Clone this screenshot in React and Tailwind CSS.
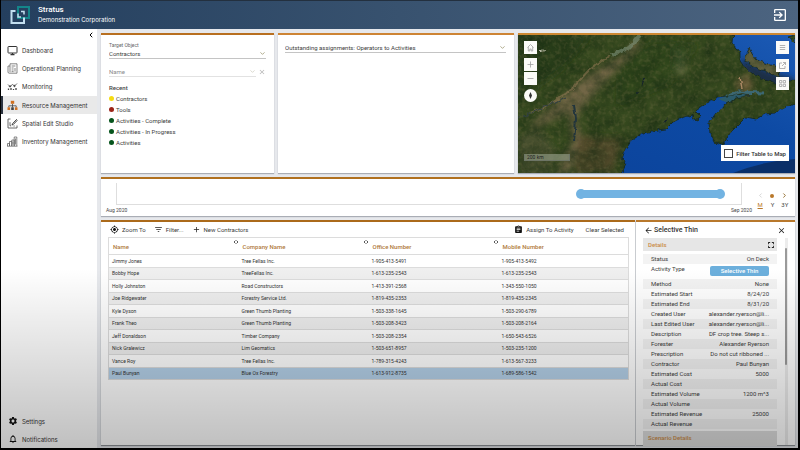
import React, { useState } from 'react';
import {
  MdAdd,
  MdArrowBack,
  MdAssignment,
  MdClose,
  MdExitToApp,
  MdFilterList,
  MdFullscreen,
  MdGpsFixed,
  MdNotificationsNone,
  MdSettings,
} from 'react-icons/md';
import { LuChevronDown, LuChevronLeft, LuChevronRight, LuChevronsLeftRight } from 'react-icons/lu';

const CONTACTS = [
  ['Jimmy Jones', 'Tree Fellas Inc.', '1-905-413-5491', '1-905-413-5492'],
  ['Bobby Hope', 'TreeFellas Inc.', '1-613-235-2543', '1-613-235-2543'],
  ['Holly Johnston', 'Road Constructors', '1-413-391-2568', '1-343-550-1050'],
  ['Joe Ridgewater', 'Forestry Service Ltd.', '1-819-435-2353', '1-819-435-2345'],
  ['Kyle Dyson', 'Green Thumb Planting', '1-503-338-1645', '1-503-290-6789'],
  ['Frank Theo', 'Green Thumb Planting', '1-503-208-3423', '1-503-208-2164'],
  ['Jeff Donaldson', 'Timber Company', '1-503-208-2354', '1-650-543-6526'],
  ['Nick Gralewicz', 'Lim Geomatics', '1-503-651-8957', '1-503-235-1200'],
  ['Vance Roy', 'Tree Fellas Inc.', '1-789-315-4243', '1-613-567-3233'],
  ['Paul Bunyan', 'Blue Ox Forestry', '1-613-912-8735', '1-689-586-1542'],
];

const COLUMNS = ['Name', 'Company Name', 'Office Number', 'Mobile Number'];

const DETAILS = [
  ['Status', 'On Deck'],
  ['Activity Type', 'Selective Thin'],
  ['Method', 'None'],
  ['Estimated Start', '8/24/20'],
  ['Estimated End', '8/31/20'],
  ['Created User', 'alexander.ryerson@li...'],
  ['Last Edited User', 'alexander.ryerson@li...'],
  ['Description', 'DF crop tree. Steep s...'],
  ['Forester', 'Alexander Ryerson'],
  ['Prescription', 'Do not cut ribboned ...'],
  ['Contractor', 'Paul Bunyan'],
  ['Estimated Cost', '5000'],
  ['Actual Cost', ''],
  ['Estimated Volume', '1200 m^3'],
  ['Actual Volume', ''],
  ['Estimated Revenue', '25000'],
  ['Actual Revenue', ''],
];

const RECENT = [
  { label: 'Contractors', dot: 'bg-[#f5dc14]' },
  { label: 'Tools', dot: 'bg-[#9c2418]' },
  { label: 'Activities - Complete', dot: 'bg-[#06541c]' },
  { label: 'Activities - In Progress', dot: 'bg-[#06541c]' },
  { label: 'Activities', dot: 'bg-[#06541c]' },
];

// Share of the visible month, in percent
const TASK = { start: 73.5, length: 24 };

const Logo = () => (
  <svg viewBox="0 0 22 20" className="w-[22px] h-5" fill="none" strokeWidth="2">
    <path d="M9 2h11v11H9z" stroke="#14858a" />
    <path d="M6.500 6H2.500v12H15v-5.500" stroke="#c3dff0" />
    <path d="M9 8.500V12h3M12 6.500h3V9.500" stroke="#c3dff0" strokeWidth="1.500" />
  </svg>
);

const DashboardIcon = () => (
  <svg viewBox="0 0 11 11" className="size-[11px]" fill="none" stroke="#333">
    <rect x="1" y="1.500" width="9" height="6.500" rx="0.600" />
    <path d="M3.500 9.700h4M5.500 8v1.500" strokeWidth="1.200" />
  </svg>
);

const PlanningIcon = () => (
  <svg viewBox="0 0 11 11" className="size-[11px]" fill="none" stroke="#555" strokeWidth="0.700">
    <path d="M3 .8h7v9.400H2.200A1.200 1.200 0 0 1 1 9V3h2z" />
    <path d="M3 3v6.200M4.600 3h3.800M4.600 5h2M4.600 7h2M4.600 8.600h2M8 5v3.600" />
  </svg>
);

const MonitoringIcon = () => (
  <svg viewBox="0 0 11 11" className="size-[11px]" fill="none" stroke="#444" strokeWidth="0.800">
    <path d="M1 3.500l2 2 2.500-2 2 1.500L10 2.500" />
    <path d="M1.500 9V7.500M4 9V7M6.500 9V8M9 9V7" strokeWidth="1.300" />
    <circle cx="3" cy="5.400" r="0.700" fill="#444" />
    <circle cx="7.500" cy="5" r="0.700" fill="#444" />
  </svg>
);

const ResourceIcon = () => (
  <svg viewBox="0 0 11 11" className="size-[11px]" fill="none">
    <path d="M5.500 4v2M1.800 7.500V5.800h7.400v1.700M5.500 6v1.500" stroke="#444" strokeWidth="0.800" />
    <rect x="3.800" y="0.800" width="3.400" height="3" fill="#d07020" />
    <rect x="0.500" y="7.300" width="2.600" height="2.700" fill="#d07020" />
    <rect x="4.200" y="7.300" width="2.600" height="2.700" fill="#444" />
    <rect x="7.900" y="7.300" width="2.600" height="2.700" fill="#d07020" />
  </svg>
);

const SpatialIcon = () => (
  <svg viewBox="0 0 11 11" className="size-[11px]" fill="none" stroke="#444" strokeWidth="0.800">
    <path d="M3.500 1H1v9h9V7.500" />
    <path d="M9.800 1.200L5.600 5.600 5 7l1.400-.6 4-4.200" strokeWidth="1" />
    <path d="M3 4.200v3.600h1.200M6.500 8h1.200" />
  </svg>
);

const InventoryIcon = () => (
  <svg viewBox="0 0 11 11" className="size-[11px]" fill="none" stroke="#555" strokeWidth="0.700">
    <path d="M.5 10V7.500h2V10M2.500 10V5.500h2.300V10M4.800 10V4h2.400v6M7.200 10V1h2.600v9M0 10.200h10.500" />
    <path d="M8.500 2.500v6M6 5.500v3" />
  </svg>
);

const NAV = [
  { label: 'Dashboard', Icon: DashboardIcon },
  { label: 'Operational Planning', Icon: PlanningIcon },
  { label: 'Monitoring', Icon: MonitoringIcon },
  { label: 'Resource Management', Icon: ResourceIcon },
  { label: 'Spatial Edit Studio', Icon: SpatialIcon },
  { label: 'Inventory Management', Icon: InventoryIcon },
];

const MAINLAND =
  'M-4 -4H215L214 8 222 18 222 26 227 33 235 39 246 45 258 49 281 44V68L268 72 257 78 247 79 238 84 228 82 221 89 212 98 205 110 197 108 192 98 191 88 198 78 208 69 219 63 231 60 224 58 216 60 208 61 200 62 189 68 179 75 174 80 165 82 155 87 148 94 139 95 125 98 114 105 107 115 104 124 108 129 102 142H-4Z';
const PEI = 'M232 12L228 20 227 26 235 32 247 36 261 43 262 33 250 29 240 26 234 19Z';

const Terrain = () => (
  <svg viewBox="0 0 277 138" preserveAspectRatio="none" className="absolute inset-0 size-full">
    <defs>
      <linearGradient id="sea" x1="0" y1="1" x2="1" y2="0">
        <stop offset="0" stopColor="#0b429a" />
        <stop offset="0.600" stopColor="#0d4aa4" />
        <stop offset="1" stopColor="#1c5ab4" />
      </linearGradient>
      <filter id="soft" x="-20%" y="-20%" width="140%" height="140%">
        <feGaussianBlur stdDeviation="3" />
      </filter>
      <filter id="edge" x="0" y="0" width="100%" height="100%" colorInterpolationFilters="sRGB">
        <feTurbulence type="fractalNoise" baseFrequency="0.200" numOctaves="2" seed="4" />
        <feDisplacementMap in="SourceGraphic" scale="5" xChannelSelector="R" yChannelSelector="G" />
      </filter>
      <filter id="dark" x="0" y="0" width="100%" height="100%" colorInterpolationFilters="sRGB">
        <feTurbulence type="fractalNoise" baseFrequency="0.070" numOctaves="5" seed="8" />
        <feColorMatrix values="0 0 0 0 0.090  0 0 0 0 0.170  0 0 0 0 0.070  1.600 0 0 0 -0.500" />
      </filter>
      <filter id="light" x="0" y="0" width="100%" height="100%" colorInterpolationFilters="sRGB">
        <feTurbulence type="fractalNoise" baseFrequency="0.250" numOctaves="3" seed="21" />
        <feColorMatrix values="0 0 0 0 0.450  0 0 0 0 0.430  0 0 0 0 0.270  0 1.600 0 0 -0.700" />
      </filter>
      <clipPath id="land">
        <path d={MAINLAND} />
        <path d={PEI} />
      </clipPath>
    </defs>
    <rect width="277" height="138" fill="url(#sea)" />
    <path d="M215 138Q245 126 277 124V138Z" fill="#0a2f68" />
    <path d="M222 22L236 30 262 40 277 44V54L240 50 224 34Z" fill="#1a2f45" filter="url(#soft)" />
    <path d="M200 64L214 59 236 58 216 70Z" fill="#2c5b6a" />
    <g filter="url(#edge)">
      <g fill="#36491f" stroke="#14261f" strokeWidth="0.800">
        <path d={MAINLAND} />
        <path d={PEI} fill="#5d5d3c" />
        <path d="M173 83l4-7 5 5-3 5z" />
        <path d="M270 2l7-2v8z" />
      </g>
    </g>
    <g clipPath="url(#land)">
      <g filter="url(#soft)">
        <path d="M10 92L40 66 70 40 108 18 118 4 122 10 90 44 70 66 58 82 64 110 50 138 38 138 54 106 50 78 24 90Z" fill="#7c6b4c" opacity="0.850" />
        <path d="M0 102l20-10 18 24-6 22H0z" fill="#46502f" />
        <path d="M60 100l46 4-12 34H56z" fill="#54492a" opacity="0.800" />
        <path d="M156 10l12 8-2 24-10-8z" fill="#72764c" opacity="0.900" />
        <path d="M100 30l36-24 44 4-30 40-50 20z" fill="#2c471d" opacity="0.700" />
        <path d="M0 0h74L42 36 0 66z" fill="#243c19" opacity="0.800" />
        <path d="M216 48l14-10 6 14-12 8z" fill="#95724c" opacity="0.800" />
      </g>
      <rect width="277" height="138" filter="url(#dark)" opacity="0.700" />
      <rect width="277" height="138" filter="url(#light)" opacity="0.550" />
      <g filter="url(#edge)" fill="none">
        <path d="M122 0l-10 12-18 8" stroke="#7f927c" strokeWidth="4" opacity="0.600" />
        <path d="M92 20L70 36 54 54 28 72 12 78" stroke="#9a7c5a" strokeWidth="2" opacity="0.500" />
        <path d="M56 70l2 14-2 22" stroke="#22353c" strokeWidth="2" />
        <path d="M0 84L22 74 48 62" stroke="#2f3f43" />
        <path d="M22 16l6-2" stroke="#b6b7a4" />
        <path d="M208 62l12-5 26 1" stroke="#3c6772" strokeWidth="3" />
        <path d="M222 42l2 12" stroke="#ab8864" strokeWidth="1.500" />
        <path d="M126 44l-3 8M118 58h4M146 88l3-4" stroke="#16242a" strokeWidth="1.500" />
      </g>
    </g>
  </svg>
);

const Select = ({ label, muted, value, children, className }) => (
  <span className={`relative flex items-center ${className || ''}`}>
    <select
      aria-label={label}
      defaultValue={value}
      className={`w-full h-[11px] appearance-none bg-transparent border-b text-[6px] outline-none ${
        muted ? 'border-[#e2e2e2] text-[#8a8a8a]' : 'border-[#c4c4c4] text-[#3c3c3c]'
      }`}
    >
      <option>{value}</option>
      {children}
    </select>
    <LuChevronDown
      className={`absolute right-0 size-[7px] pointer-events-none ${muted ? 'text-[#c3bfae]' : 'text-[#7b7340]'}`}
    />
  </span>
);

const MapButton = ({ label, children, className }) => (
  <button
    type="button"
    aria-label={label}
    className={`flex items-center justify-center size-[13px] bg-[#fbfbf8] text-[#a0a0a0] ${className || ''}`}
  >
    <svg viewBox="0 0 9 9" className="size-[9px]" fill="none" stroke="currentColor" strokeWidth="0.800">
      {children}
    </svg>
  </button>
);

const NavLink = ({ label, Icon, active, onClick }) => (
  <a
    href="#"
    onClick={onClick}
    className={`flex flex-1 items-center gap-1 border-l-2 pl-1 whitespace-nowrap ${
      active ? 'border-[#2b3340] bg-[#e9e9e9]' : 'border-transparent'
    }`}
  >
    <span className="flex justify-center w-[11px]">
      <Icon />
    </span>
    {label}
  </a>
);

const Header = () => (
  <header className="flex items-center h-[29px] shrink-0 pl-2 pr-2.5 border-t border-[#23303f] bg-linear-to-r from-[#243f5e] via-[#38526f] to-[#4c6480] text-white">
    <Logo />
    <div className="flex-1 pl-[7px]">
      <h1 className="text-[8px] leading-[10px] font-medium">Stratus</h1>
      <p className="font-['Inter',sans-serif] text-[6px] leading-[10px]">Demonstration Corporation</p>
    </div>
    <button type="button" aria-label="Sign out">
      <MdExitToApp className="size-4" />
    </button>
  </header>
);

const Sidebar = () => {
  const [current, setCurrent] = useState('Resource Management');

  return (
    <aside className="flex flex-col w-24 shrink-0 bg-white font-['Inter',sans-serif] text-[6px] text-[#333]">
      <button type="button" aria-label="Collapse menu" className="self-end flex items-center h-3 pr-0.5">
        <LuChevronLeft className="size-2 text-black" strokeWidth="3" />
      </button>
      <nav className="flex flex-col h-[110px]">
        {NAV.map((item) => (
          <NavLink
            key={item.label}
            {...item}
            active={item.label === current}
            onClick={() => setCurrent(item.label)}
          />
        ))}
      </nav>
      <div className="flex flex-col h-9 mt-auto">
        <NavLink label="Settings" Icon={() => <MdSettings className="size-[10px] text-[#111]" />} />
        <NavLink label="Notifications" Icon={() => <MdNotificationsNone className="size-[10px] text-[#111]" />} />
      </div>
    </aside>
  );
};

const TargetPanel = () => (
  <section className="flex flex-col px-2 pt-[7px] border-t-2 border-[#b86f20] bg-white shadow-[0_1px_1px_#a9adb5]">
    <span className="text-[5px] leading-[6px] text-[#666]">Target Object</span>
    <Select label="Target Object" value="Contractors">
      <option>Tools</option>
    </Select>
    <div className="flex items-center gap-0.5 mt-[7px]">
      <Select label="Name" value="Name" muted className="flex-1" />
      <button type="button" aria-label="Clear name">
        <MdClose className="size-2 text-[#b5b5b5]" />
      </button>
    </div>
    <h2 className="mt-[6px] text-[6px] leading-[10px] font-medium text-[#444]">Recent</h2>
    <ul className="text-[6px] text-[#3c3c3c]">
      {RECENT.map(({ label, dot }) => (
        <li key={label} className="flex items-center gap-0.5 h-[11px]">
          <span className={`size-[5px] rounded-full ${dot}`} />
          {label}
        </li>
      ))}
    </ul>
  </section>
);

const AssignmentsPanel = () => (
  <section className="pl-[7px] pr-2 pt-[7px] border-t-2 border-[#cd8434] bg-white shadow-[0_1px_1px_#a9adb5]">
    <Select label="Outstanding assignments" value="Outstanding assignments: Operators to Activities" />
  </section>
);

const MapPanel = () => (
  <section className="relative overflow-hidden border-t-2 border-[#cd8832] shadow-[0_1px_1px_#a9adb5]">
    <Terrain />
    <div className="absolute left-1.5 top-1.5 flex flex-col gap-1">
      <MapButton label="Home">
        <path d="M1.500 4.500L4.500 1.500l3 3M2.300 4v4h1.500V6h1.400v2h1.500V4" />
      </MapButton>
      <div className="flex flex-col gap-px">
        <MapButton label="Zoom in">
          <path d="M4.500 1.500v6M1.500 4.500h6" />
        </MapButton>
        <MapButton label="Zoom out">
          <path d="M1.500 4.500h6" />
        </MapButton>
      </div>
      <MapButton label="Reset bearing" className="rounded-full">
        <path d="M4.500 1L6 4.500 4.500 8 3 4.500z" fill="#333" stroke="none" />
      </MapButton>
    </div>
    <div className="absolute right-1.5 top-1.5 flex flex-col gap-[5px]">
      <MapButton label="Layers">
        <path d="M1.800 2.500h5.400M1.800 4.500h5.400M1.800 6.500h5.400" />
      </MapButton>
      <MapButton label="Open map">
        <path d="M4 2H1.500v5.500H7V5M5 1.500h2.500V4M7.500 1.500L4 5" />
      </MapButton>
      <MapButton label="Basemaps">
        <path d="M1.500 1.500h2.300v2.300H1.500zM5.200 1.500h2.300v2.300H5.200zM1.500 5.200h2.300v2.300H1.500zM5.200 5.200h2.300v2.300H5.200z" />
      </MapButton>
    </div>
    <span className="absolute left-1.5 bottom-3 w-[46px] h-[7px] pl-0.5 border border-t-0 border-[#6d7566] bg-[#9aa38d]/60 text-[5px] leading-[6px] text-[#222]">
      200 km
    </span>
    <label className="absolute right-1.5 bottom-3 flex items-center gap-[3px] h-4 px-[3px] bg-white text-[6px] font-medium text-[#333] whitespace-nowrap">
      <input type="checkbox" className="appearance-none size-[9px] border border-[#444] checked:bg-[#cd8832]" />
      Filter Table to Map
    </label>
  </section>
);

const Timeline = () => (
  <section className="flex h-[39px] shrink-0 border-t-2 border-[#b0701f] bg-white shadow-[0_1px_1px_#a9adb5] text-[5px] text-[#444]">
    <div className="flex-1 pl-[15px] pt-1">
      <div className="relative h-[22px] border-x border-b border-[#dedede]">
        <div
          className="absolute top-[6px] flex items-center h-[10px]"
          style={{ left: `${TASK.start}%`, width: `${TASK.length}%` }}
        >
          <span className="size-[10px] rounded-full bg-[#72b3e2]" />
          <span className="flex-1 -mx-[5px] h-2 bg-[#72b3e2]" />
          <span className="size-[10px] rounded-full bg-[#72b3e2]" />
        </div>
      </div>
      <div className="flex justify-between h-[11px] -mx-2.5 items-center">
        <span>Aug 2020</span>
        <span>Sep 2020</span>
      </div>
    </div>
    <div className="grid grid-cols-3 content-center items-center justify-items-center w-[37px] ml-3 mr-1 pt-[6px] gap-y-0.5 text-[6px] leading-2">
      <button type="button" aria-label="Previous">
        <LuChevronLeft className="size-[7px] text-[#bbb]" />
      </button>
      <button type="button" aria-label="Today" className="size-1 rounded-full bg-[#b9782a]" />
      <button type="button" aria-label="Next">
        <LuChevronRight className="size-[7px] text-[#8a6420]" strokeWidth="3" />
      </button>
      <button type="button" className="text-[#b9782a] underline">M</button>
      <button type="button">Y</button>
      <button type="button">3Y</button>
    </div>
  </section>
);

const ContractorsTable = () => {
  const [selected, setSelected] = useState('Paul Bunyan');

  return (
    <section className="flex-1 min-w-0 pl-[7px] pr-[6px] border-t-2 border-[#ab6a1b] bg-white shadow-[0_1px_1px_#8b8f95]">
      <div className="flex items-center h-[15px] px-0.5 text-[6px] text-[#3c3c3c]">
        <button type="button" className="flex items-center gap-[3px]">
          <MdGpsFixed className="size-[9px] text-[#111]" />
          Zoom To
        </button>
        <button type="button" className="flex items-center gap-[3px] ml-2">
          <MdFilterList className="size-[9px] text-[#222]" />
          Filter...
        </button>
        <button type="button" className="flex items-center gap-[3px] ml-2">
          <MdAdd className="size-[9px] text-[#222]" />
          New Contractors
        </button>
        <button type="button" className="flex items-center gap-[3px] ml-auto">
          <MdAssignment className="size-[9px] text-[#111]" />
          Assign To Activity
        </button>
        <button type="button" className="ml-3 mr-[3px]">Clear Selected</button>
      </div>
      <table className="w-full h-[143px] table-fixed border border-[#dcdcdc] border-collapse text-left">
        <thead>
          <tr>
            {COLUMNS.map((name, i) => (
              <th key={name} className="relative h-[17px] p-0 pl-1 text-[6px] font-medium text-[#b07a3a]">
                {name}
                {i < 3 && <LuChevronsLeftRight className="absolute right-0 top-px size-[6px] text-[#222]" strokeWidth="3" />}
              </th>
            ))}
          </tr>
        </thead>
        <tbody className="text-[5px] leading-[6px] text-[#333]">
          {CONTACTS.map((row, i) => (
            <tr
              key={row[0]}
              onClick={() => setSelected(row[0])}
              className={`h-3 border-t border-[#dcdcdc] ${
                row[0] === selected ? 'bg-[#b4d0e8]' : i % 2 ? 'bg-[#efefef]' : 'bg-white'
              }`}
            >
              {row.map((cell, j) => (
                <td key={j} className="p-0 pl-[3px]">{cell}</td>
              ))}
            </tr>
          ))}
        </tbody>
      </table>
    </section>
  );
};

const DetailPanel = () => (
  <section className="flex flex-col w-[159px] shrink-0 border-t-2 border-[#b8782c] bg-white shadow-[0_1px_1px_#8b8f95]">
    <div className="flex items-center gap-px h-4 shrink-0 pl-2 pr-[9px]">
      <button type="button" aria-label="Back">
        <MdArrowBack className="size-[9px] text-[#222]" />
      </button>
      <h2 className="flex-1 text-[7px] font-medium text-[#333]">Selective Thin</h2>
      <button type="button" aria-label="Close">
        <MdClose className="size-[9px] text-[#222]" />
      </button>
    </div>
    <div className="flex flex-1 min-h-0 px-[7px]">
      <div className="flex-1 min-w-0 text-[6px] text-[#3c3c3c]">
        <div className="flex items-center justify-between h-[13px] pl-[5px] pr-px bg-[#e6e6e6]">
          <h3 className="font-medium text-[#c98a45]">Details</h3>
          <button type="button" aria-label="Expand details">
            <MdFullscreen className="size-[10px] text-[#222]" />
          </button>
        </div>
        <dl className="pt-[3px] leading-[10px]">
          {DETAILS.map(([label, value], i) => (
            <div
              key={label}
              className={`flex justify-between px-2 whitespace-nowrap ${i % 2 ? '' : 'bg-[#f3f3f3]'} ${
                i === 1 ? 'h-[15px]' : 'h-[10px]'
              }`}
            >
              <dt>{label}</dt>
              <dd className={i === 1 ? 'w-[59px] pt-0.5' : ''}>
                {i === 1 ? (
                  <button type="button" className="block w-full rounded-xs bg-[#6cafdc] font-medium text-white">
                    {value}
                  </button>
                ) : (
                  value
                )}
              </dd>
            </div>
          ))}
        </dl>
        <h3 className="mt-0.5 pl-[5px] h-[15px] leading-[14px] bg-[#dddddd] font-medium text-[#c98a45]">
          Scenario Details
        </h3>
      </div>
      <div className="w-[3px] ml-2 bg-[#ececec]">
        <div className="h-[117px] mt-2.5 w-0.5 rounded-full bg-[#9a9a9a]" />
      </div>
    </div>
  </section>
);

const App = () => {
  return (
    <div className="relative flex flex-col h-screen overflow-hidden border-l border-r-2 border-b-2 border-black bg-[#e6e8ec] font-['Roboto',sans-serif]">
      <Header />
      <div className="flex flex-1 min-h-0">
        <Sidebar />
        <main className="flex flex-col flex-1 min-w-0 gap-1 pl-1 pr-[3px] pt-1 pb-[3px]">
          <div className="grid grid-cols-[173fr_236fr_277fr] gap-1 h-[140px] shrink-0">
            <TargetPanel />
            <AssignmentsPanel />
            <MapPanel />
          </div>
          <Timeline />
          <div className="flex flex-1 min-h-0 gap-px">
            <ContractorsTable />
            <DetailPanel />
          </div>
        </main>
      </div>
      {/* Shade over the lower part of the screen */}
      <div className="absolute inset-x-0 bottom-0 h-2/5 pointer-events-none bg-linear-to-b from-transparent to-black/25" />
    </div>
  );
};

export default App;
